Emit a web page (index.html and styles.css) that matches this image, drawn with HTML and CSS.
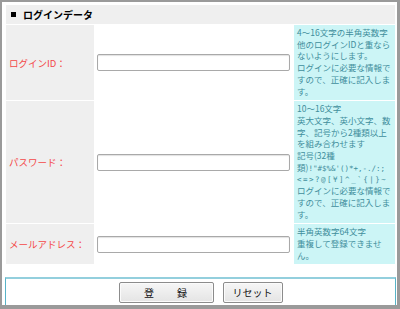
FILE: index.html
```html
<!DOCTYPE html>
<html lang="ja">
<head>
    <meta charset="UTF-8">
    <meta name="viewport" content="width=device-width, initial-scale=1.0">
    <title>ログインデータ</title>
    <link rel="stylesheet" href="styles.css">
</head>
<body>
    <div class="frame">
        <form id="loginForm" class="form-grid">
            <div class="section-head"><span class="mark"></span>ログインデータ</div>

            <div class="label">ログインID：</div>
            <div class="field"><input type="text" id="loginId"></div>
            <div class="note">4～16文字の半角英数字他のログインIDと重ならないようにします。<br>ログインに必要な情報ですので、正確に記入します。</div>

            <div class="label">パスワード：</div>
            <div class="field"><input type="password" id="password"></div>
            <div class="note">10～16文字<br>英大文字、英小文字、数字、記号から2種類以上を組み合わせます<br>記号(32種<br>類)<span class="sym">!&quot;#$%&amp;'()*+,-./:;</span><br><span class="sym wide">&lt;=&gt;?@[¥]^_`{|}~</span><br>ログインに必要な情報ですので、正確に記入します。</div>

            <div class="label">メールアドレス：</div>
            <div class="field"><input type="text" id="email"></div>
            <div class="note">半角英数字64文字<br>重複して登録できません。</div>
        </form>
        <div class="actions">
            <button type="submit" form="loginForm" class="btn-submit">登　　録</button>
            <button type="reset" form="loginForm">リセット</button>
        </div>
    </div>
</body>
</html>
```

FILE: styles.css
```css
body {
    margin: 0;
    background-color: #9a9a9a;
    font-family: "Noto Sans CJK JP", "Noto Sans", sans-serif;
}
.frame {
    margin: 2px 3px 0 2px;
    height: 303px;
    padding: 3px 2px 0 4px;
    box-sizing: border-box;
    background-color: #fff;
    overflow: hidden;
}
.form-grid {
    display: grid;
    grid-template-columns: 88px 200px 101px;
    row-gap: 1px;
}
.section-head {
    grid-column: 1 / 4;
    display: flex;
    align-items: center;
    height: 19px;
    padding-left: 5px;
    background-color: #efefef;
    font-size: 10px;
    font-weight: bold;
    color: #000;
}
.mark {
    width: 5px;
    height: 5px;
    margin-right: 7px;
    background-color: #000;
}
.label {
    display: flex;
    align-items: center;
    padding-left: 3px;
    background-color: #efefef;
    color: #f44848;
    font-size: 9.5px;
}
.field {
    display: flex;
    align-items: center;
    padding-left: 3px;
}
.field input {
    width: 193px;
    height: 17px;
    box-sizing: border-box;
    border: 1px solid #a9a9a9;
    border-radius: 2px;
    box-shadow: inset 0 1px 1px #e2e2e2;
    padding: 0 3px;
}
.note {
    padding: 2px 1px 3px 3px;
    background-color: #ccf5f6;
    color: #3f8e9c;
    font-size: 8.5px;
    line-height: 11.7px;
}
.sym {
    font-family: "DejaVu Sans Mono", monospace;
    font-size: 7.5px;
    line-height: 1;
}
.sym.wide {
    letter-spacing: 1.5px;
}
.actions {
    display: flex;
    justify-content: center;
    align-items: center;
    gap: 9px;
    height: 29px;
    margin: 13px -1px 0 -1px;
    box-sizing: border-box;
    border: 1px solid #58b3c7;
    border-top: 2px solid #93cfdd;
}
.actions button {
    height: 21px;
    padding: 0 9px;
    border: 1px solid #8c8c8c;
    border-radius: 2px;
    background: linear-gradient(#f6f6f6, #e4e4e4);
    box-shadow: inset 0 0 0 1px #fbfbfb;
    font-family: "Noto Sans CJK JP", sans-serif;
    font-size: 10px;
    color: #111;
}
.actions .btn-submit {
    width: 95px;
    letter-spacing: 1px;
}
```
